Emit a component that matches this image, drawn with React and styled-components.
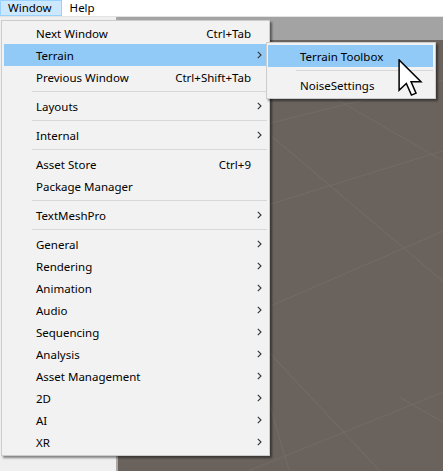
import React from "react";
import styled, { createGlobalStyle } from "styled-components";

const GlobalStyle = createGlobalStyle`
  html, body { margin: 0; padding: 0; background: #ffffff; }
  body { overflow: hidden; font-family: "Segoe UI", "Noto Sans", "Open Sans", sans-serif; }
  * { box-sizing: border-box; }
`;

const Screen = styled.div`
  position: relative;
  width: 443px;
  height: 471px;
  overflow: hidden;
  display: flex;
  flex-direction: column;
  font-size: 11.5px;
  color: #000;
`;

const MenuBar = styled.div`
  height: 20px;
  background: #ffffff;
  border-bottom: 1px solid #e3e3e3;
  display: flex;
  align-items: stretch;
`;

const MenuBarItem = styled.div`
  display: flex;
  align-items: center;
  padding: 0 9px 0 7px;
  border: 1px solid ${(p) => (p.$active ? "#99d1ff" : "transparent")};
  background: ${(p) => (p.$active ? "#cce8ff" : "transparent")};
  line-height: 1;
`;

const Workspace = styled.div`
  flex: 1;
  display: flex;
`;

const SidePanel = styled.div`
  width: 118px;
  background: #efefef;
  border-right: 2px solid #a9a9a9;
`;

const MainColumn = styled.div`
  flex: 1;
  display: flex;
  flex-direction: column;
`;

const Toolbar = styled.div`
  height: 23px;
  background: #a3a3a3;
`;

const SceneView = styled.div`
  flex: 1;
  position: relative;
  background: #6a635d;
  overflow: hidden;
`;

const SceneGrid = styled.svg`
  display: block;
  width: 100%;
  height: 100%;
`;

const MenuPanel = styled.div`
  position: absolute;
  left: ${(p) => p.$left}px;
  top: ${(p) => p.$top}px;
  width: ${(p) => p.$width}px;
  background: #f2f2f2;
  border: 1px solid #cccccc;
  padding: 1px 2px 2px 2px;
  box-shadow: 2px 2px 2px rgba(0, 0, 0, 0.45);
  display: flex;
  flex-direction: column;
`;

const SubPanel = styled(MenuPanel)`
  padding: 2px 2px 2px 1px;
`;

const Row = styled.div`
  height: 22px;
  display: grid;
  grid-template-columns: 1fr auto 16px;
  align-items: center;
  padding-left: 32px;
  background: ${(p) => (p.$hover ? "#91c9f7" : "transparent")};
  white-space: nowrap;
`;

const Shortcut = styled.span`
  text-align: right;
`;

const Arrow = styled.svg`
  justify-self: center;
  margin-left: 1px;
`;

const Separator = styled.div`
  height: 7px;
  display: flex;
  align-items: center;
  padding-left: 28px;
  &::after {
    content: "";
    flex: 1;
    height: 1px;
    background: #d7d7d7;
  }
`;

const Cursor = styled.svg`
  position: absolute;
  left: 398px;
  top: 59px;
`;

const ChevronRight = () => (
  <Arrow width="5" height="8" viewBox="0 0 5 8">
    <path d="M0.8 0.8 L4 4 L0.8 7.2" fill="none" stroke="#333" strokeWidth="1.1" />
  </Arrow>
);

const mainItems = [
  { label: "Next Window", shortcut: "Ctrl+Tab" },
  { label: "Terrain", sub: true, hover: true },
  { label: "Previous Window", shortcut: "Ctrl+Shift+Tab" },
  { sep: true },
  { label: "Layouts", sub: true },
  { sep: true },
  { label: "Internal", sub: true },
  { sep: true },
  { label: "Asset Store", shortcut: "Ctrl+9" },
  { label: "Package Manager" },
  { sep: true },
  { label: "TextMeshPro", sub: true },
  { sep: true },
  { label: "General", sub: true },
  { label: "Rendering", sub: true },
  { label: "Animation", sub: true },
  { label: "Audio", sub: true },
  { label: "Sequencing", sub: true },
  { label: "Analysis", sub: true },
  { label: "Asset Management", sub: true },
  { label: "2D", sub: true },
  { label: "AI", sub: true },
  { label: "XR", sub: true },
];

const subItems = [
  { label: "Terrain Toolbox", hover: true },
  { sep: true },
  { label: "NoiseSettings" },
];

const renderItems = (items) =>
  items.map((it, i) =>
    it.sep ? (
      <Separator key={i} />
    ) : (
      <Row key={i} $hover={it.hover}>
        <span>{it.label}</span>
        <Shortcut>{it.shortcut || ""}</Shortcut>
        {it.sub ? <ChevronRight /> : <span />}
      </Row>
    )
  );

export default function App() {
  return (
    <>
      <GlobalStyle />
      <Screen>
        <MenuBar>
          <MenuBarItem $active>Window</MenuBarItem>
          <MenuBarItem>Help</MenuBarItem>
        </MenuBar>
        <Workspace>
          <SidePanel />
          <MainColumn>
            <Toolbar />
            <SceneView>
              <SceneGrid viewBox="0 0 323 428" preserveAspectRatio="none">
                <g stroke="#7a736d" strokeWidth="1" fill="none" opacity="0.55">
                  <line x1="0" y1="120" x2="323" y2="40" />
                  <line x1="0" y1="210" x2="323" y2="110" />
                  <line x1="0" y1="330" x2="323" y2="190" />
                  <line x1="130" y1="428" x2="323" y2="350" />
                  <line x1="40" y1="0" x2="323" y2="240" />
                  <line x1="150" y1="20" x2="323" y2="120" />
                  <line x1="0" y1="150" x2="260" y2="428" />
                  <line x1="150" y1="360" x2="170" y2="428" />
                  <line x1="280" y1="355" x2="323" y2="380" />
                </g>
              </SceneGrid>
            </SceneView>
          </MainColumn>
        </Workspace>

        <MenuPanel $left={1} $top={20} $width={269}>
          {renderItems(mainItems)}
        </MenuPanel>

        <SubPanel $left={266} $top={42} $width={170}>
          {renderItems(subItems)}
        </SubPanel>

        <Cursor width="25" height="38" viewBox="0 0 13 20">
          <path
            d="M0.5 0.5 L0.5 16.5 L4.3 12.9 L7 19 L9.4 18 L6.8 12 L12 12 Z"
            fill="#ffffff"
            stroke="#000000"
            strokeWidth="0.8"
            strokeLinejoin="miter"
          />
        </Cursor>
      </Screen>
    </>
  );
}
